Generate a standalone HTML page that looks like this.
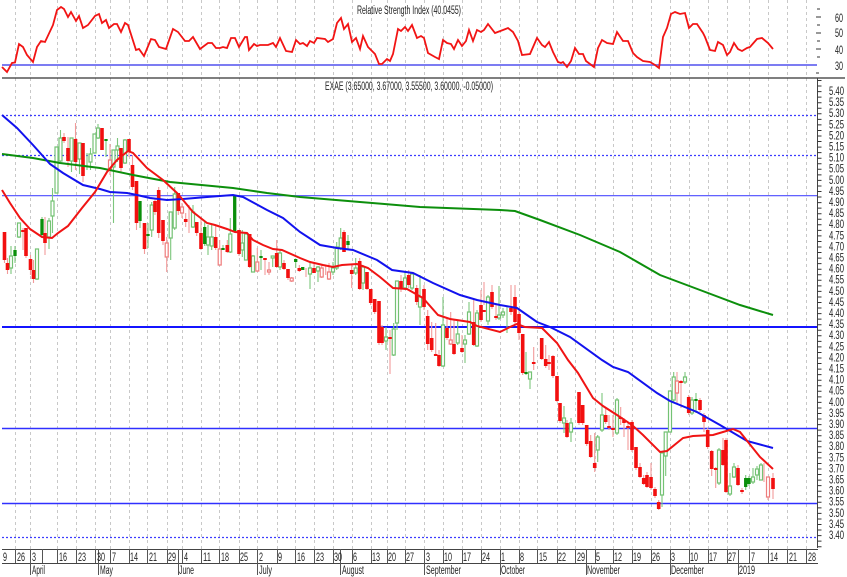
<!DOCTYPE html>
<html><head><meta charset="utf-8"><style>
html,body{margin:0;padding:0;background:#fff;width:847px;height:577px;overflow:hidden}
svg{display:block;filter:blur(.3px)}
text{font-family:"Liberation Sans",sans-serif;font-size:11.5px;fill:#222}
</style></head><body>
<svg width="847" height="577" viewBox="0 0 847 577" xmlns="http://www.w3.org/2000/svg">
<rect width="847" height="577" fill="#fff"/>
<path d="M15.5 0V549M30.5 0V549M57.5 0V549M76.5 0V549M95.5 0V549M110.5 0V549M129.5 0V549M147.5 0V549M167.5 0V549M182.5 0V549M201.5 0V549M219.5 0V549M239.5 0V549M257.5 0V549M277.5 0V549M295.5 0V549M314.5 0V549M333.5 0V549M352.5 0V549M371.5 0V549M387.5 0V549M405.5 0V549M424.5 0V549M443.5 0V549M462.5 0V549M481.5 0V549M500.5 0V549M519.5 0V549M537.5 0V549M557.5 0V549M575.5 0V549M595.5 0V549M613.5 0V549M632.5 0V549M651.5 0V549M670.5 0V549M689.5 0V549M708.5 0V549M727.5 0V549M749.5 0V549M768.5 0V549M787.5 0V549M806.5 0V549" stroke="#c8c8c8" stroke-width="1" stroke-dasharray="3 3" fill="none"/>

<path d="M2 115.5H817M2 155.5H817M2 537.5H817" stroke="#3c3cff" stroke-width="1.3" stroke-dasharray="2 2" fill="none"/>
<path d="M2 195.7H817" stroke="#4c4cff" stroke-width="1.2" fill="none"/>
<path d="M2 327H817" stroke="#1414ff" stroke-width="2" fill="none"/>
<path d="M2 428.5H817M2 503.5H817" stroke="#3030ff" stroke-width="1.5" fill="none"/>
<path d="M2 65H817" stroke="#7c7cf2" stroke-width="2" fill="none"/>
<path d="M2 78H845" stroke="#333" stroke-width="1.2" fill="none"/>

<!-- green wicks -->
<path d="M11 246V274M15 246V263M19 223V238M37 249V280M42 217V237M49 218V249M52.5 188V233M56.5 147V193M60.5 130V162M71.5 138V172M79.5 143V174M87 153V170M90.5 148V170M94.5 134V153M98 124V139M106 139V157M113.5 150V223M117.5 138V162M125 139V164M140 201V228M148 223V248M151.7 202V237M170.7 212V260M174.7 187V230M193 205V228M204.7 222V246M208 225V255M211.7 225V250M223 245V250M230.3 218V253M234.7 195V205M242.3 230V257M246 234V260M253 255V272M261 250V270M272.7 256V267M280 250V270M295.7 259V268M310 263V289M318 266V282M333 262V275M336.7 242V270M340.7 228V250M348 235V250M355.7 258V275M363 265V290M386 327V350M393.7 323V356M397 281V330M405 272V290M412 272V290M420 275V325M443 297V367M457.7 320V345M465 335V363M469 302V335M477 310V347M488 295V325M499 286V320M503 308V318M507 307V333M526 352V375M530 372V389M564 406V433M571 418V442M597.7 435V462M602 393V432M617 398V435M662 453V507M665.7 432V476M670 391V432M673.7 372V402M685 372V384M692 397V415M696 393V413M719 448V485M730 473V496M734 463V478M745.7 475V490M749 476V486M753 468V484M757 466V480M761 463V480" stroke="#7cc67c" stroke-width="1.1" fill="none"/>
<!-- red wicks -->
<path d="M4.5 232V263M7.5 258V274M23 228V250M26 228V258M30.5 255V275M33.5 260V283M45 217V255M64 133V143M68 137V167M75.5 123V170M83 143V182M102 128V150M110 144V175M121 148V172M129 139V157M132.5 155V190M136.5 181V230M144.5 223V254M155 198V215M158.7 187V238M163 220V245M166.7 237V272M178.3 193V215M182 203V218M185.7 213V227M189 205V233M196.7 222V236M201 217V250M215.7 225V250M219.7 240V265M227.3 240V253M239 230V256M249.7 234V268M257.3 248V272M265 260V275M269 262V275M276.7 240V268M284 260V270M288 269V280M291.7 277V282M299.3 265V272M306 268V277M314 262V273M321.7 265V278M325.7 266V275M329 263V280M344 230V252M351.7 265V288M359.7 258V290M367 272V290M370.7 289V305M374.7 299V314M379 301V345M382 325V345M390 330V374M401 275V292M408.7 270V288M416.7 285V305M424 285V310M427.7 310V350M431.7 322V352M435.7 323V355M439 350V367M447 318V340M450.7 312V345M454 320V355M462 335V353M473.7 300V346M481 290V322M484 282V305M492 285V309M496 305V320M511 285V315M515 285V325M519 310V340M522.7 334V375M533.7 347V370M541.7 338V360M545.7 345V368M549 355V370M553 355V378M557 376V402M560 403V423M567 420V438M579 392V425M582.7 405V425M586.7 425V446M590.7 435V458M594.7 433V472M605.7 407V424M609 415V430M613 415V437M620.7 407V425M624 418V437M628 423V450M632 420V452M636 447V470M640 463V478M643.7 475V485M647 472V488M651 463V490M655 487V498M658.7 500V510M677 372V403M681 380V408M688.7 395V415M700 398V412M704 413V432M707.7 428V449M711.7 450V476M715.7 467V488M723 438V466M726 438V493M738 465V486M742 488V494M764 463V482M768 477V500M773 473V499" stroke="#f29a9a" stroke-width="1.1" fill="none"/>
<!-- hollow green bodies -->
<path d="M9.5 256h3v12h-3zM17.5 223h3v14h-3zM35.5 249h3v30h-3zM47.5 221h3v16h-3zM51 201h3v15h-3zM55 147h3v46h-3zM59 138h3v23h-3zM70 138h3v23h-3zM78 143h3v16h-3zM89 154h3v8h-3zM93 134h3v19h-3zM96.5 128h3v10h-3zM112 150h3v17h-3zM116 146h3v4h-3zM123.5 140h3v23h-3zM150.2 205h3v25h-3zM169.2 212h3v26h-3zM173.2 194h3v34h-3zM191.5 212h3v15h-3zM206.5 237h3v8h-3zM210.2 237h3v9h-3zM228.8 234h3v18h-3zM240.8 243h3v7h-3zM244.5 234h3v26h-3zM251.5 256h3v16h-3zM271.2 256h3v2h-3zM278.5 253h3v14h-3zM308.5 268h3v6h-3zM316.5 267h3v4h-3zM331.5 268h3v4h-3zM335.2 247h3v21h-3zM339.2 238h3v10h-3zM354.2 268h3v5h-3zM361.5 267h3v16h-3zM384.5 337h3v4h-3zM392.2 329h3v26h-3zM395.5 281h3v42h-3zM403.5 278h3v10h-3zM410.5 274h3v14h-3zM418.5 297h3v10h-3zM441.5 325h3v41h-3zM456.2 334h3v9h-3zM463.5 340h3v4h-3zM467.5 312h3v22h-3zM475.5 313h3v33h-3zM486.5 297h3v24h-3zM497.5 315h3v3h-3zM501.5 312h3v3h-3zM528.5 372h3v7h-3zM562.5 418h3v5h-3zM569.5 423h3v9h-3zM596.2 437h3v13h-3zM600.5 415h3v15h-3zM615.5 400h3v33h-3zM660.5 453h3v42h-3zM664.2 432h3v24h-3zM668.5 391h3v41h-3zM672.2 377h3v23h-3zM683.5 377h3v5h-3zM690.5 400h3v13h-3zM717.5 450h3v33h-3zM728.5 486h3v8h-3zM732.5 467h3v10h-3zM751.5 477h3v5h-3zM755.5 469h3v6h-3zM759.5 465h3v15h-3z" fill="#fff" stroke="#74c274" stroke-width="1.2"/>
<!-- hollow red bodies -->
<path d="M108.5 160h3v10h-3zM165.2 243h3v14h-3zM180.5 207h3v6h-3zM218.2 249h3v16h-3zM255.8 262h3v9h-3zM267.5 270h3v2h-3zM290.2 278h3v3h-3zM320.2 268h3v9h-3zM327.5 272h3v7h-3zM449.2 340h3v4h-3zM675.5 381h3v12h-3zM766.5 477h3v20h-3z" fill="#fff" stroke="#ee7c7c" stroke-width="1.2"/>
<!-- solid green -->
<path d="M15 250V256M42 219V235M106 139V141M140 201V221M148 234V236M204.7 227V244M223 248V250M234.7 195V232M261 256V258M295.7 259V262M302.7 267V270M348 241V245M526 372V374M696 399V401M745.7 478V487M749 478V484" stroke="#0a8f0a" stroke-width="3.3" fill="none"/>
<!-- solid red -->
<path d="M4.5 232V260M7.5 263V270M23 230V232M26 228V256M30.5 259V270M33.5 270V279M45 233V243M64 137V141M68 148V161M75.5 139V162M83 143V176M102 128V150M121 148V168M129 139V152M132.5 165V187M136.5 181V223M144.5 223V249M155 201V212M158.7 190V233M163 220V241M178.3 193V211M185.7 219V222M196.7 222V233M201 233V249M215.7 237V248M227.3 245V252M239 230V254M249.7 234V267M265 258V260M276.7 253V267M284 263V269M288 269V278M299.3 268V271M314 268V273M344 232V252M351.7 270V274M359.7 261V289M367 272V289M370.7 289V303M374.7 299V312M379 301V343M382 327V343M390 337V339M401 281V289M408.7 275V285M416.7 288V302M424 289V307M427.7 316V344M431.7 338V350M435.7 354V356M439 355V366M447 328V338M454 344V354M462 348V352M473.7 322V345M481 305V320M484 310V312M492 292V307M496 316V318M511 308V312M515 297V322M519 314V333M522.7 334V373M533.7 362V364M541.7 338V359M545.7 359V366M549 362V364M553 356V376M557 376V401M560 403V421M567 423V437M579 392V423M582.7 405V423M586.7 425V444M590.7 441V457M594.7 463V468M605.7 415V422M609 426V428M613 428V430M620.7 417V419M624 420V423M628 426V428M632 422V450M636 447V468M640 467V477M643.7 478V484M647 475V487M651 477V488M655 489V496M658.7 502V509M681 381V383M688.7 397V413M700 400V410M704 415V422M707.7 430V447M711.7 451V469M715.7 468V470M723 450V465M726 440V492M738 468V485M742 490V492M773 478V489" stroke="#f20f0f" stroke-width="3.6" fill="none"/>

<!-- moving averages -->
<path d="M2 154L33 158L60 163L100 168L133 175L170 182L233 188L267 193L300 197L360 202L420 207L500 210L515 211L540 220L580 235L620 252L660 275L700 290L740 305L773 315" fill="none" stroke="#0c8f0c" stroke-width="2"/>
<path d="M2 115L17 128L33 145L50 164L63 173L83 185L100 189L110 192L127 193L137 195L150 198L167 200L183 199L207 197L233 195L243 197L267 210L283 218L300 232L320 245L337 248L353 250L377 260L392 270L413 273L433 283L460 295L477 300L500 305L517 308L537 322L550 327L570 337L602 360L613 367L628 372L657 393L670 401L697 412L720 425L747 441L773 448" fill="none" stroke="#1212ee" stroke-width="2"/>
<path d="M2 190L10 203L20 218L30 229L42 237L52 238L58 233L68 226L82 208L95 192L107 172L117 160L128 151L133 153L147 168L163 180L177 193L183 200L193 212L207 223L215 225L227 229L235 232L247 233L253 240L263 245L273 249L282 250L300 258L310 262L323 265L333 267L342 265L357 264L368 268L380 277L393 288L407 289L423 298L438 315L450 319L470 322L477 326L500 332L510 327L517 324L525 327L542 328L557 343L568 360L578 373L593 398L603 406L617 415L632 425L643 435L660 452L667 451L683 438L693 436L713 435L723 432L733 429L740 432L748 442L760 457L773 469" fill="none" stroke="#f01414" stroke-width="2"/>
<!-- RSI -->
<path d="M2 67L7 72L12 63L15 62.5L19 44L23 47L27 55L33 62L37 47L41 41L45 42L53 25L57 10L61 7L64 9L68 17L71 12L76 21L79 16L83 28L88 25L95 16L99 14L102 23L106 20L109 28L114 24L117 24L121 32L125 23L128 25L136 50L139 49L144 56L151 39L155 40L159 47L166 49L173 29L178 32L185 41L189 41L193 37L200 49L208 43L212 43L216 48L220 48L223 47L227 48L231 38L235 38L239 47L245 37L247 37L249 50L254 44L257 46L260 45L268 45L273 43L276 47L280 38L286 51L292 52L296 40L300 44L303 43L307 46L310 41L314 43L317 38L325 39L328 42L333 39L337 23L341 18L344 29L348 24L352 42L356 38L360 49L363 36L368 47L375 54L379 64L382 64L387 59L390 61L393 54L398 29L401 31L405 27L408 31L412 25L417 38L421 36L424 38L428 53L435 57L439 59L443 40L447 43L451 44L454 49L458 40L462 46L466 41L469 30L473 41L477 30L481 32L484 30L488 24L495 33L503 30L508 28L513 32L518 41L522 55L530 54L537 38L542 45L545 47L549 42L553 52L558 62L561 63L563 62L567 67L571 61L575 48L579 54L583 54L586 61L590 64L594 67L598 48L602 40L607 43L613 44L617 32L623 41L628 41L633 53L637 57L643 61L650 62L655 65L659 68L663 37L667 28L671 14L675 12L680 14L685 13L689 28L693 24L697 24L703 33L705 37L710 50L715 51L718 42L723 45L727 55L730 52L734 43L738 49L742 51L747 48L750 47L757 39L762 38L768 43L773 49" fill="none" stroke="#f21414" stroke-width="1.8"/>

<!-- axes -->
<path d="M817.5 78V548" stroke="#444" stroke-width="1" fill="none"/>
<path d="M819.5 80V548" stroke="#333" stroke-width="4" stroke-dasharray="1 4.55" fill="none"/>
<path d="M817 9h3M816 17h5M817 25h3M816 33h5M817 41h3M816 49h5M817 57h3M816 73h3" stroke="#333" stroke-width="1" fill="none"/>
<path d="M2 549.5H818M2 563.5H818" stroke="#444" stroke-width="1" fill="none"/>
<path d="M15.5 549V563M30.5 549V575M42.5 549V563M57.5 549V563M76.5 549V563M95.5 549V563M98.5 549V575M110.5 549V563M129.5 549V563M147.5 549V563M167.5 549V563M178.5 549V575M182.5 549V563M201.5 549V563M219.5 549V563M239.5 549V563M257.5 549V575M277.5 549V563M295.5 549V563M314.5 549V563M333.5 549V563M340.5 549V575M352.5 549V563M371.5 549V563M387.5 549V563M405.5 549V563M424.5 549V575M443.5 549V563M462.5 549V563M481.5 549V563M500.5 549V575M519.5 549V563M537.5 549V563M557.5 549V563M575.5 549V563M586.5 549V575M595.5 549V563M613.5 549V563M632.5 549V563M651.5 549V563M670.5 549V575M689.5 549V563M708.5 549V563M727.5 549V563M738.5 549V575M749.5 549V563M768.5 549V563M787.5 549V563M806.5 549V563" stroke="#555" stroke-width="1" fill="none"/>

<text x="357" y="14" textLength="104" lengthAdjust="spacingAndGlyphs">Relative Strength Index (40.0455)</text>
<text x="325" y="90" textLength="168" lengthAdjust="spacingAndGlyphs">EXAE (3.65000, 3.67000, 3.55500, 3.60000, -0.05000)</text>

<g>
<text x="835" y="22" textLength="8" lengthAdjust="spacingAndGlyphs">60</text>
<text x="835" y="37" textLength="8" lengthAdjust="spacingAndGlyphs">50</text>
<text x="835" y="54" textLength="8" lengthAdjust="spacingAndGlyphs">40</text>
<text x="835" y="70" textLength="8" lengthAdjust="spacingAndGlyphs">30</text>
</g>
<g>
<text x="829" y="95" textLength="15" lengthAdjust="spacingAndGlyphs">5.40</text>
<text x="829" y="106.1" textLength="15" lengthAdjust="spacingAndGlyphs">5.35</text>
<text x="829" y="117.2" textLength="15" lengthAdjust="spacingAndGlyphs">5.30</text>
<text x="829" y="128.3" textLength="15" lengthAdjust="spacingAndGlyphs">5.25</text>
<text x="829" y="139.4" textLength="15" lengthAdjust="spacingAndGlyphs">5.20</text>
<text x="829" y="150.5" textLength="15" lengthAdjust="spacingAndGlyphs">5.15</text>
<text x="829" y="161.6" textLength="15" lengthAdjust="spacingAndGlyphs">5.10</text>
<text x="829" y="172.7" textLength="15" lengthAdjust="spacingAndGlyphs">5.05</text>
<text x="829" y="183.8" textLength="15" lengthAdjust="spacingAndGlyphs">5.00</text>
<text x="829" y="194.9" textLength="15" lengthAdjust="spacingAndGlyphs">4.95</text>
<text x="829" y="206" textLength="15" lengthAdjust="spacingAndGlyphs">4.90</text>
<text x="829" y="217.1" textLength="15" lengthAdjust="spacingAndGlyphs">4.85</text>
<text x="829" y="228.2" textLength="15" lengthAdjust="spacingAndGlyphs">4.80</text>
<text x="829" y="239.3" textLength="15" lengthAdjust="spacingAndGlyphs">4.75</text>
<text x="829" y="250.4" textLength="15" lengthAdjust="spacingAndGlyphs">4.70</text>
<text x="829" y="261.5" textLength="15" lengthAdjust="spacingAndGlyphs">4.65</text>
<text x="829" y="272.6" textLength="15" lengthAdjust="spacingAndGlyphs">4.60</text>
<text x="829" y="283.7" textLength="15" lengthAdjust="spacingAndGlyphs">4.55</text>
<text x="829" y="294.8" textLength="15" lengthAdjust="spacingAndGlyphs">4.50</text>
<text x="829" y="305.9" textLength="15" lengthAdjust="spacingAndGlyphs">4.45</text>
<text x="829" y="317" textLength="15" lengthAdjust="spacingAndGlyphs">4.40</text>
<text x="829" y="328.1" textLength="15" lengthAdjust="spacingAndGlyphs">4.35</text>
<text x="829" y="339.2" textLength="15" lengthAdjust="spacingAndGlyphs">4.30</text>
<text x="829" y="350.3" textLength="15" lengthAdjust="spacingAndGlyphs">4.25</text>
<text x="829" y="361.4" textLength="15" lengthAdjust="spacingAndGlyphs">4.20</text>
<text x="829" y="372.5" textLength="15" lengthAdjust="spacingAndGlyphs">4.15</text>
<text x="829" y="383.6" textLength="15" lengthAdjust="spacingAndGlyphs">4.10</text>
<text x="829" y="394.7" textLength="15" lengthAdjust="spacingAndGlyphs">4.05</text>
<text x="829" y="405.8" textLength="15" lengthAdjust="spacingAndGlyphs">4.00</text>
<text x="829" y="416.9" textLength="15" lengthAdjust="spacingAndGlyphs">3.95</text>
<text x="829" y="428" textLength="15" lengthAdjust="spacingAndGlyphs">3.90</text>
<text x="829" y="439.1" textLength="15" lengthAdjust="spacingAndGlyphs">3.85</text>
<text x="829" y="450.2" textLength="15" lengthAdjust="spacingAndGlyphs">3.80</text>
<text x="829" y="461.3" textLength="15" lengthAdjust="spacingAndGlyphs">3.75</text>
<text x="829" y="472.4" textLength="15" lengthAdjust="spacingAndGlyphs">3.70</text>
<text x="829" y="483.5" textLength="15" lengthAdjust="spacingAndGlyphs">3.65</text>
<text x="829" y="494.6" textLength="15" lengthAdjust="spacingAndGlyphs">3.60</text>
<text x="829" y="505.7" textLength="15" lengthAdjust="spacingAndGlyphs">3.55</text>
<text x="829" y="516.8" textLength="15" lengthAdjust="spacingAndGlyphs">3.50</text>
<text x="829" y="527.9" textLength="15" lengthAdjust="spacingAndGlyphs">3.45</text>
<text x="829" y="539" textLength="15" lengthAdjust="spacingAndGlyphs">3.40</text>
</g>
<g>
<text x="3" y="561" textLength="4" lengthAdjust="spacingAndGlyphs">9</text>
<text x="17" y="561" textLength="8" lengthAdjust="spacingAndGlyphs">26</text>
<text x="32" y="561" textLength="4" lengthAdjust="spacingAndGlyphs">3</text>
<text x="59" y="561" textLength="8" lengthAdjust="spacingAndGlyphs">16</text>
<text x="78" y="561" textLength="8" lengthAdjust="spacingAndGlyphs">23</text>
<text x="97" y="561" textLength="8" lengthAdjust="spacingAndGlyphs">30</text>
<text x="112" y="561" textLength="4" lengthAdjust="spacingAndGlyphs">7</text>
<text x="130" y="561" textLength="8" lengthAdjust="spacingAndGlyphs">14</text>
<text x="149" y="561" textLength="8" lengthAdjust="spacingAndGlyphs">21</text>
<text x="168" y="561" textLength="8" lengthAdjust="spacingAndGlyphs">29</text>
<text x="184" y="561" textLength="4" lengthAdjust="spacingAndGlyphs">4</text>
<text x="203" y="561" textLength="8" lengthAdjust="spacingAndGlyphs">11</text>
<text x="221" y="561" textLength="8" lengthAdjust="spacingAndGlyphs">18</text>
<text x="240" y="561" textLength="8" lengthAdjust="spacingAndGlyphs">25</text>
<text x="259" y="561" textLength="4" lengthAdjust="spacingAndGlyphs">2</text>
<text x="278" y="561" textLength="4" lengthAdjust="spacingAndGlyphs">9</text>
<text x="297" y="561" textLength="8" lengthAdjust="spacingAndGlyphs">16</text>
<text x="316" y="561" textLength="8" lengthAdjust="spacingAndGlyphs">23</text>
<text x="334" y="561" textLength="8" lengthAdjust="spacingAndGlyphs">30</text>
<text x="353" y="561" textLength="4" lengthAdjust="spacingAndGlyphs">6</text>
<text x="372" y="561" textLength="8" lengthAdjust="spacingAndGlyphs">13</text>
<text x="388" y="561" textLength="8" lengthAdjust="spacingAndGlyphs">20</text>
<text x="406" y="561" textLength="8" lengthAdjust="spacingAndGlyphs">27</text>
<text x="426" y="561" textLength="4" lengthAdjust="spacingAndGlyphs">3</text>
<text x="444" y="561" textLength="8" lengthAdjust="spacingAndGlyphs">10</text>
<text x="463" y="561" textLength="8" lengthAdjust="spacingAndGlyphs">17</text>
<text x="482" y="561" textLength="8" lengthAdjust="spacingAndGlyphs">24</text>
<text x="501" y="561" textLength="4" lengthAdjust="spacingAndGlyphs">1</text>
<text x="520" y="561" textLength="4" lengthAdjust="spacingAndGlyphs">8</text>
<text x="539" y="561" textLength="8" lengthAdjust="spacingAndGlyphs">15</text>
<text x="558" y="561" textLength="8" lengthAdjust="spacingAndGlyphs">22</text>
<text x="577" y="561" textLength="8" lengthAdjust="spacingAndGlyphs">29</text>
<text x="596" y="561" textLength="4" lengthAdjust="spacingAndGlyphs">5</text>
<text x="614" y="561" textLength="8" lengthAdjust="spacingAndGlyphs">12</text>
<text x="633" y="561" textLength="8" lengthAdjust="spacingAndGlyphs">19</text>
<text x="652" y="561" textLength="8" lengthAdjust="spacingAndGlyphs">26</text>
<text x="671" y="561" textLength="4" lengthAdjust="spacingAndGlyphs">3</text>
<text x="690" y="561" textLength="8" lengthAdjust="spacingAndGlyphs">10</text>
<text x="709" y="561" textLength="8" lengthAdjust="spacingAndGlyphs">17</text>
<text x="728" y="561" textLength="8" lengthAdjust="spacingAndGlyphs">27</text>
<text x="751" y="561" textLength="4" lengthAdjust="spacingAndGlyphs">7</text>
<text x="770" y="561" textLength="8" lengthAdjust="spacingAndGlyphs">14</text>
<text x="789" y="561" textLength="8" lengthAdjust="spacingAndGlyphs">21</text>
<text x="808" y="561" textLength="8" lengthAdjust="spacingAndGlyphs">28</text>
</g>
<g>
<text x="32" y="574" textLength="13" lengthAdjust="spacingAndGlyphs">April</text>
<text x="100" y="574" textLength="13" lengthAdjust="spacingAndGlyphs">May</text>
<text x="179" y="574" textLength="15" lengthAdjust="spacingAndGlyphs">June</text>
<text x="259" y="574" textLength="13" lengthAdjust="spacingAndGlyphs">July</text>
<text x="342" y="574" textLength="22" lengthAdjust="spacingAndGlyphs">August</text>
<text x="426" y="574" textLength="35" lengthAdjust="spacingAndGlyphs">September</text>
<text x="501" y="574" textLength="24" lengthAdjust="spacingAndGlyphs">October</text>
<text x="587" y="574" textLength="33" lengthAdjust="spacingAndGlyphs">November</text>
<text x="671" y="574" textLength="33" lengthAdjust="spacingAndGlyphs">December</text>
<text x="739" y="574" textLength="16" lengthAdjust="spacingAndGlyphs">2019</text>
</g>
</svg>
</body></html>
